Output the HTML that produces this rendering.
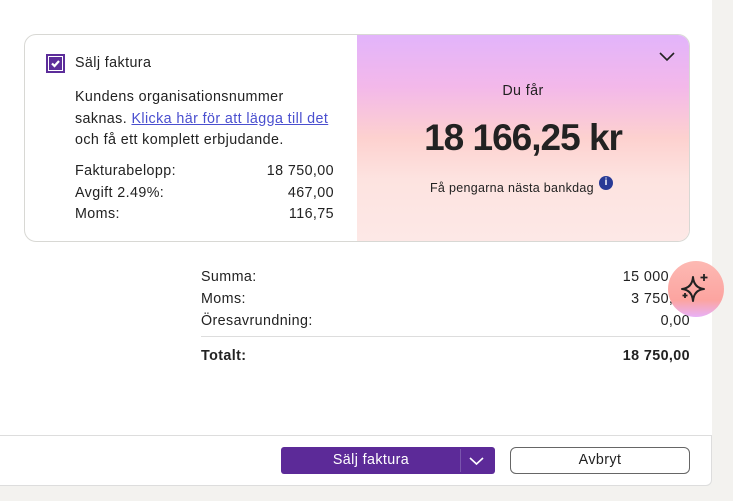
<!DOCTYPE html><html><head><style>
body{margin:0;width:733px;height:501px;background:#f3f2ef;font-family:"Liberation Sans",sans-serif;color:#222;position:relative;overflow:hidden}
.main{position:absolute;left:0;top:0;width:712px;height:435px;background:#fff}
.foot{position:absolute;left:0;top:435px;width:712px;height:51px;background:#fff;border-top:1px solid #ddd;border-bottom:1px solid #ddd;border-right:1px solid #ddd;border-bottom-right-radius:6px;box-sizing:border-box}
.card{position:absolute;left:24px;top:34px;width:666px;height:208px;border:1px solid #d8d8d4;border-radius:12px;box-sizing:border-box;overflow:hidden}
.right{position:absolute;left:332px;top:0;right:0;bottom:0;background:linear-gradient(#e2b4fb 0%,#f3b8ea 25%,#fdd1cf 50%,#fde3e0 70%,#fde8e6 100%)}
.t{position:absolute;font-size:14.3px;white-space:nowrap;letter-spacing:0.4px}
.r{text-align:right}
</style></head><body>
<div class="main"></div>
<div class="card">
 <div style="position:absolute;left:21px;top:19px;width:19px;height:19px;border:2px solid #5c2d9a;box-sizing:border-box;padding:1px"><svg width="13" height="13" style="display:block;background:#5c2d9a"><path d="M3 6.5l2.5 2.5 4.5-5" fill="none" stroke="#fff" stroke-width="2.2"/></svg></div>
 <div class="t" style="left:50px;top:20px">Sälj faktura</div>
 <div class="t" style="left:50px;top:52px;line-height:21.5px">Kundens organisationsnummer<br>saknas. <span style="color:#4a4fcf;text-decoration:underline">Klicka här för att lägga till det</span><br>och få ett komplett erbjudande.</div>
 <div class="t" style="left:50px;top:126px;line-height:21.5px">Fakturabelopp:<br>Avgift 2.49%:<br>Moms:</div>
 <div class="t r" style="right:355px;top:126px;line-height:21.5px">18 750,00<br>467,00<br>116,75</div>
 <div class="right">
  <svg style="position:absolute;right:14px;top:17px" width="16" height="10"><path d="M1 1l7 7 7-7" fill="none" stroke="#222" stroke-width="1.6"/></svg>
  <div class="t" style="left:0;right:0;text-align:center;top:48px">Du får</div>
  <div class="t" style="left:0;right:0;text-align:center;top:82px;font-size:37px;font-weight:bold;letter-spacing:-1px">18 166,25 kr</div>
  <div class="t" style="left:73px;top:146px;font-size:12.5px;letter-spacing:0.3px">Få pengarna nästa bankdag</div>
  <div style="position:absolute;left:242px;top:141px;width:14px;height:14px;border-radius:50%;background:#283a96;color:#fff;font-size:10px;font-weight:bold;text-align:center;line-height:14px">i</div>
 </div>
</div>
<div class="t" style="left:201px;top:266px;line-height:22px">Summa:<br>Moms:<br>Öresavrundning:</div>
<div class="t r" style="right:43px;top:266px;line-height:22px">15 000,00<br>3 750,00<br>0,00</div>
<div style="position:absolute;left:201px;top:336px;width:489px;height:1px;background:#ddd"></div>
<div class="t" style="left:201px;top:348px;font-weight:bold">Totalt:</div>
<div class="t r" style="right:43px;top:348px;font-weight:bold">18 750,00</div>
<div style="position:absolute;left:668px;top:261px;width:56px;height:56px;border-radius:50%;background:linear-gradient(#fdb9b3,#fca4a0 70%,#e8b1f7)"></div>
<svg style="position:absolute;left:678px;top:271px" width="36" height="36" viewBox="0 0 36 36"><path d="M15 6 Q16 17 26 18 Q16 19 15 30 Q14 19 4 18 Q14 17 15 6Z" fill="none" stroke="#222" stroke-width="2" stroke-linejoin="round"/><path d="M26 3v7M22.5 6.5h7M7 22v5M4.5 24.5h5" stroke="#222" stroke-width="1.8"/></svg>
<div class="foot"></div>
<div style="position:absolute;left:281px;top:447px;width:214px;height:27px;background:#5c2a98;border-radius:3px;color:#fff;font-size:14.3px;letter-spacing:0.4px">
 <div style="position:absolute;left:0;width:180px;text-align:center;top:5px">Sälj faktura</div>
 <div style="position:absolute;left:179px;top:2px;width:1px;height:23px;background:#7a55ad"></div>
 <svg style="position:absolute;left:188px;top:10px" width="15" height="9"><path d="M1 1l6.5 6 6.5-6" fill="none" stroke="#fff" stroke-width="1.6"/></svg>
</div>
<div style="position:absolute;left:510px;top:447px;width:180px;height:27px;border:1px solid #666;border-radius:6px;box-sizing:border-box;text-align:center;font-size:14.3px;letter-spacing:0.4px;line-height:25px">Avbryt</div>
</body></html>
